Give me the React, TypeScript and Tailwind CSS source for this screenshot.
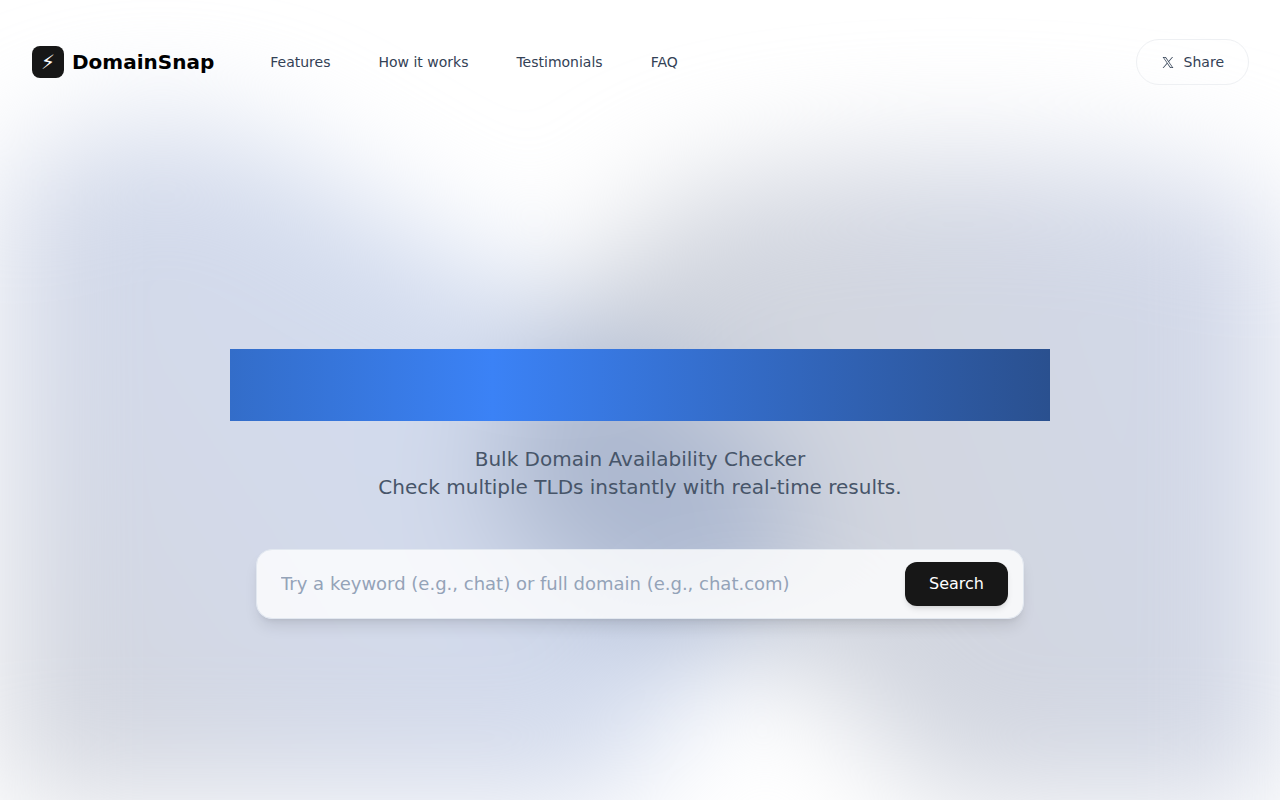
import { useState } from 'react';

const navLinks = [
  { label: 'Features', href: '#features' },
  { label: 'How it works', href: '#how-it-works' },
  { label: 'Testimonials', href: '#testimonials' },
  { label: 'FAQ', href: '#faq' }
];

// Two soft overlapping shapes behind the hero
function Backdrop() {
  return (
    <div className="absolute inset-0 -z-10 overflow-hidden">
      <svg
        className="h-full w-full overflow-hidden blur-[60px]"
        viewBox="0 0 1280 800"
        preserveAspectRatio="none"
        aria-hidden="true"
      >
        <defs>
          <linearGradient id="leftGlow" x1="0" y1="0.8" x2="0.7" y2="0.4">
            <stop offset="0" stopColor="#d3d6de" />
            <stop offset="0.4" stopColor="#d3d9e8" />
            <stop offset="1" stopColor="#d2dcf0" />
          </linearGradient>
          <linearGradient id="rightGlow" x1="0" y1="0.5" x2="1" y2="0.2">
            <stop offset="0" stopColor="#cfd3da" />
            <stop offset="0.5" stopColor="#d2d6e0" />
            <stop offset="1" stopColor="#d2d9eb" />
          </linearGradient>
        </defs>
        <path
          d="M0 190 C60 120 200 105 300 165 C430 250 580 310 720 410 C830 480 800 570 740 630 C690 690 650 740 610 800 L0 800 Z"
          fill="url(#leftGlow)"
        />
        <path
          className="mix-blend-multiply"
          d="M1280 220 C1220 155 860 140 700 190 C600 230 570 320 520 400 C440 510 550 590 680 620 C800 640 840 700 940 800 L1280 800 Z"
          fill="url(#rightGlow)"
        />
      </svg>
    </div>
  );
}

function XLogo() {
  return (
    <svg className="h-[11px] w-3" viewBox="0 0 1200 1227" fill="currentColor" aria-hidden="true">
      <path d="M714.163 519.284L1160.89 0H1055.03L667.137 450.887L357.328 0H0L468.492 681.821L0 1226.37H105.866L515.491 750.218L842.672 1226.37H1200L714.137 519.284H714.163ZM569.165 687.828L521.697 619.934L144.011 79.6944H306.615L611.412 515.685L658.88 583.579L1055.08 1150.3H892.476L569.165 687.854V687.828Z" />
    </svg>
  );
}

function Header() {
  return (
    <header className="flex items-center justify-between pt-[39px] pr-[31px] pl-8">
      <div className="flex items-center gap-14">
        <a href="#" className="flex items-center gap-2">
          <span className="flex h-8 w-8 items-center justify-center rounded-lg bg-[#171717] text-xl text-white">
            ⚡
          </span>
          <span className="text-xl font-bold text-black">DomainSnap</span>
        </a>
        <nav className="flex items-center gap-12">
          {navLinks.map((link) => (
            <a key={link.href} href={link.href} className="text-sm text-[#334155] hover:text-slate-900">
              {link.label}
            </a>
          ))}
        </nav>
      </div>
      <button
        type="button"
        className="flex items-center gap-2.5 rounded-full border border-[#eef0f3] bg-white/20 py-3 pr-6 pl-[25px] text-sm text-[#334155]"
      >
        <XLogo />
        <span>Share</span>
      </button>
    </header>
  );
}

function SearchForm() {
  const [query, setQuery] = useState('');

  return (
    <form
      onSubmit={(e) => e.preventDefault()}
      className="flex w-full max-w-3xl items-center rounded-2xl border border-[#e2e8f0] bg-white/80 py-3 pr-[15px] pl-6 shadow-lg"
    >
      <input
        type="text"
        value={query}
        onChange={(e) => setQuery(e.target.value)}
        aria-label="Keyword or domain"
        placeholder="Try a keyword (e.g., chat) or full domain (e.g., chat.com)"
        className="min-w-0 flex-1 bg-transparent text-lg text-slate-900 outline-none placeholder:text-[#94a3b8]"
      />
      <button type="submit" className="rounded-xl bg-[#171717] px-6 py-2.5 text-base text-white shadow-md">
        Search
      </button>
    </form>
  );
}

export default function App() {
  return (
    <div className="relative isolate flex min-h-screen flex-col overflow-hidden bg-white font-['DejaVu_Sans',sans-serif]">
      <Backdrop />
      <Header />
      <main className="flex flex-1 flex-col items-center justify-center px-8 pt-[83px]">
        <div className="h-[72px] w-full max-w-[820px] bg-linear-to-r from-[#336dc9] via-[#3b82f6] via-32% to-[#2a508f]" />
        <p className="mt-6 text-center text-xl text-[#475569]">
          Bulk Domain Availability Checker
          <br />
          Check multiple TLDs instantly with real-time results.
        </p>
        <div className="mt-12 flex w-full justify-center">
          <SearchForm />
        </div>
      </main>
    </div>
  );
}
